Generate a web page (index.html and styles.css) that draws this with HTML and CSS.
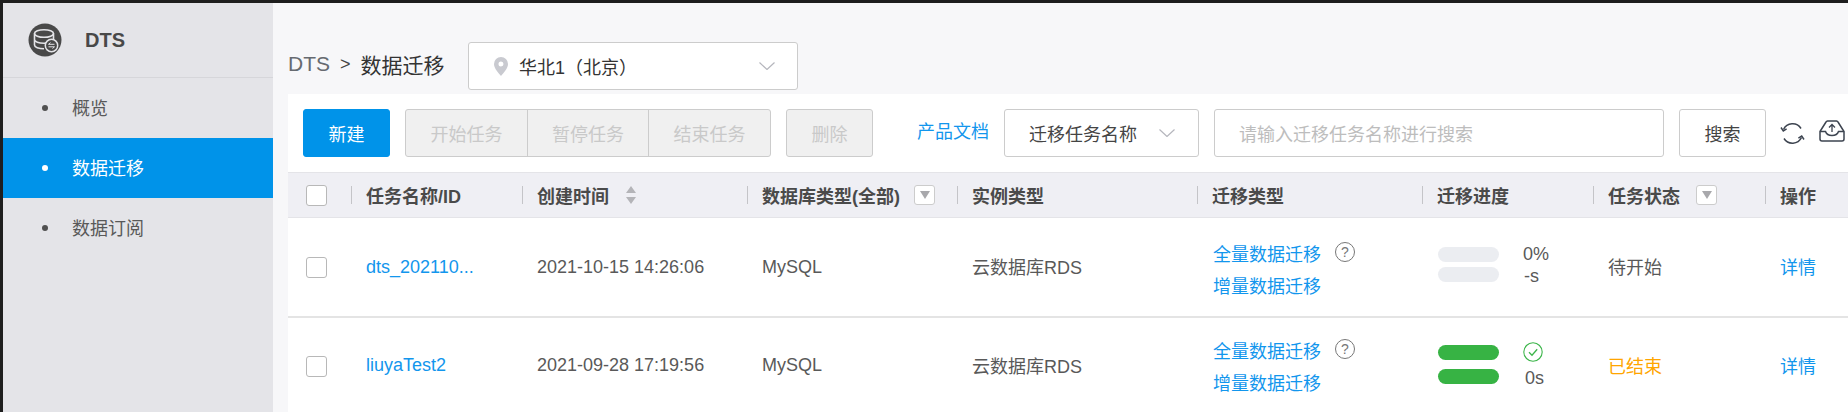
FILE: index.html
```html
<!DOCTYPE html>
<html lang="zh-CN">
<head>
<meta charset="utf-8">
<title>DTS 数据迁移</title>
<link rel="stylesheet" href="styles.css">
</head>
<body>
<div class="app">
  <aside class="sidebar">
    <div class="brand">
      <svg class="brand-logo" viewBox="0 0 34 34" width="34" height="34">
        <circle cx="17" cy="17" r="16.5" fill="#494949"/>
        <g fill="none" stroke="#e4e4e8" stroke-width="1.6">
          <ellipse cx="16" cy="10.5" rx="9.5" ry="3.8"/>
          <path d="M6.5 10.5v11.5c0 2.2 4.2 3.8 9.5 3.8M25.500 10.500v6M6.500 16.500c0 2.200 4.200 3.800 9.500 3.800 1.500 0 2.800-.1 4-.4"/>
        </g>
        <circle cx="23.500" cy="22.500" r="6.200" fill="#494949" stroke="#e4e4e8" stroke-width="1.500"/>
        <path d="M20.500 21.300h6M20.500 21.300l2-1.700M26.500 23.800h-6M26.500 23.800l-2 1.700" fill="none" stroke="#e4e4e8" stroke-width="1"/>
      </svg>
      <span class="brand-name">DTS</span>
    </div>
    <nav class="nav">
      <a class="nav-item"><i class="nav-dot"></i>概览</a>
      <a class="nav-item is-active"><i class="nav-dot"></i>数据迁移</a>
      <a class="nav-item"><i class="nav-dot"></i>数据订阅</a>
    </nav>
  </aside>
  <main class="main">
    <header class="topbar">
      <div class="crumb"><span class="crumb-root">DTS</span><span class="crumb-sep">&gt;</span><span class="crumb-page">数据迁移</span></div>
      <div class="region">
        <svg class="pin" viewBox="0 0 14 19" width="14" height="19"><path fill-rule="evenodd" d="M7 0a7 7 0 0 1 7 7c0 4.500-4.500 9-7 12-2.500-3-7-7.500-7-12a7 7 0 0 1 7-7zm0 4.500a2.500 2.500 0 1 0 0 5 2.500 2.500 0 0 0 0-5z" fill="#c9cad0"/></svg>
        <span class="region-name">华北1（北京）</span>
        <svg class="chev chev-region" viewBox="0 0 16 8" width="16" height="8"><path d="M.5.500 8 7.500 15.500.500" fill="none" stroke="#b5b6bd" stroke-width="1.200"/></svg>
      </div>
    </header>
    <section class="panel">
      <div class="toolbar">
        <button class="btn btn-primary">新建</button>
        <div class="btn-group">
          <span class="seg seg-a">开始任务</span>
          <span class="seg seg-b">暂停任务</span>
          <span class="seg seg-c">结束任务</span>
        </div>
        <button class="btn btn-disabled">删除</button>
        <a class="doc-link">产品文档</a>
        <div class="select">
          <span>迁移任务名称</span>
          <svg class="chev" viewBox="0 0 16 8" width="16" height="8"><path d="M.5.500 8 7.500 15.500.500" fill="none" stroke="#b5b6bd" stroke-width="1.200"/></svg>
        </div>
        <div class="search-input">请输入迁移任务名称进行搜索</div>
        <button class="btn btn-default">搜索</button>
        <svg class="tool-refresh" viewBox="0 0 25 25" width="25" height="25" fill="none" stroke="#3d4450" stroke-width="1.500">
          <path d="M3.500 8.500A10 10 0 0 1 21 7.500M21.500 16.500A10 10 0 0 1 4 17.500"/>
          <path d="M1 6.500l2.300 3.400 3.300-2M24 18.500l-2.300-3.400-3.300 2"/>
        </svg>
        <svg class="tool-export" viewBox="0 0 26 22" width="26" height="22" fill="none" stroke="#3d4450" stroke-width="1.500">
          <path d="M1 11.500 7 2a2 2 0 0 1 1.500-1h9a2 2 0 0 1 1.500 1l6 9.500V19a2 2 0 0 1-2 2H3a2 2 0 0 1-2-2z"/>
          <path d="M1 11.500h5.500c1 3 3.500 4 6.500 4s5.500-1 6.500-4H25"/>
          <path d="M13 12V5M10 7.500 13 4.500l3 3" stroke-width="1.300"/>
        </svg>
      </div>
      <div class="table">
        <div class="row row-head">
          <div class="cell cell-check"><span class="checkbox"></span></div>
          <div class="cell th"><span class="th-in">任务名称/ID</span></div>
          <div class="cell th"><span class="th-in">创建时间
            <svg class="sort" viewBox="0 0 12 18" width="12" height="18"><path d="M6 0l5 7H1zM6 18l-5-7h10z" fill="#b4b4b8"/></svg></span></div>
          <div class="cell th"><span class="th-in">数据库类型(全部)<span class="filter filter-db"><i></i></span></span></div>
          <div class="cell th"><span class="th-in">实例类型</span></div>
          <div class="cell th"><span class="th-in">迁移类型</span></div>
          <div class="cell th"><span class="th-in">迁移进度</span></div>
          <div class="cell th"><span class="th-in">任务状态<span class="filter filter-status"><i></i></span></span></div>
          <div class="cell th"><span class="th-in">操作</span></div>
        </div>

        <div class="row row-body row-first">
          <div class="cell cell-check"><span class="checkbox"></span></div>
          <div class="cell td"><a class="link">dts_202110...</a></div>
          <div class="cell td">2021-10-15 14:26:06</div>
          <div class="cell td">MySQL</div>
          <div class="cell td cjk">云数据库RDS</div>
          <div class="cell td type">
            <div class="type-line"><a class="link">全量数据迁移</a><span class="help">?</span></div>
            <div class="type-line"><a class="link">增量数据迁移</a></div>
          </div>
          <div class="cell td progress progress-idle">
            <div class="prog-line"><span class="bar"></span><span class="prog-val">0%</span></div>
            <div class="prog-line"><span class="bar"></span><span class="prog-val prog-dash">-s</span></div>
          </div>
          <div class="cell td cjk">待开始</div>
          <div class="cell td cjk"><a class="link">详情</a></div>
        </div>

        <div class="row row-body row-last">
          <div class="cell cell-check"><span class="checkbox"></span></div>
          <div class="cell td"><a class="link">liuyaTest2</a></div>
          <div class="cell td">2021-09-28 17:19:56</div>
          <div class="cell td">MySQL</div>
          <div class="cell td cjk">云数据库RDS</div>
          <div class="cell td type">
            <div class="type-line"><a class="link">全量数据迁移</a><span class="help">?</span></div>
            <div class="type-line"><a class="link">增量数据迁移</a></div>
          </div>
          <div class="cell td progress progress-done">
            <div class="prog-line"><span class="bar bar-done"></span>
              <svg class="ok" viewBox="0 0 20 20" width="20" height="20" fill="none" stroke="#3cb54a"><circle cx="10" cy="10" r="9.200" stroke-width="1.100"/><path d="M6 10.300l3 3 5.200-6" stroke-width="1.300"/></svg>
            </div>
            <div class="prog-line"><span class="bar bar-done"></span><span class="prog-val prog-sec">0s</span></div>
          </div>
          <div class="cell td cjk status-done">已结束</div>
          <div class="cell td cjk"><a class="link">详情</a></div>
        </div>
      </div>
    </section>
  </main>
</div>
</body>
</html>
```

FILE: styles.css
```css
* { box-sizing: border-box; }
html, body { margin: 0; height: 100%; }
body {
  background: #1e1e1e;
  padding: 3px 0 0 3px;
  overflow: hidden;
  height: 412px;
  font-family: "Liberation Sans", "Noto Sans CJK SC", sans-serif;
  font-size: 18px;
  color: #595959;
}
.app { display: flex; width: 1845px; height: 409px; }

/* sidebar */
.sidebar { width: 270px; flex: none; background: #e4e4e8; }
.brand {
  height: 75px;
  display: flex;
  align-items: center;
  padding: 0 0 1px 25px;
  border-bottom: 1px solid #d6d6da;
}
.brand-logo { flex: none; }
.brand-name { margin: 2px 0 0 23px; font-size: 20px; font-weight: 700; color: #484848; }
.nav-item {
  height: 60px;
  display: flex;
  align-items: center;
  padding: 0 0 2px 39px;
  color: #595959;
}
.nav-dot { width: 6px; height: 6px; border-radius: 50%; background: #505050; margin: 2px 24px 0 0; }
.nav-item.is-active { background: #0093e9; color: #fff; }
.is-active .nav-dot { background: #fff; }

/* main */
.main { flex: 1; min-width: 0; background: #f7f7f9; padding-left: 15px; overflow: hidden; }
.topbar { height: 91px; padding-top: 39px; display: flex; align-items: flex-start; }
.crumb { display: flex; align-items: center; height: 44px; width: 180px; flex: none; }
.crumb-root { font-size: 21px; color: #666a70; }
.crumb-sep { font-size: 18px; margin: 0 10px; color: #444; }
.crumb-page { font-size: 21px; color: #333; }
.region {
  width: 330px;
  height: 48px;
  background: #fff;
  border: 1px solid #ccc;
  border-radius: 3px;
  display: flex;
  align-items: center;
  padding-left: 25px;
  color: #333;
}
.pin { flex: none; margin-right: 11px; }
.region-name { flex: 1; }
.chev-region { margin-right: 22px; }
.chev { flex: none; }

.panel { background: #fff; width: 1560px; height: 318px; }
.toolbar { height: 78px; padding: 15px; display: flex; align-items: stretch; white-space: nowrap; }
.toolbar > * { flex: none; }
.btn {
  font: inherit;
  width: 87px;
  height: 48px;
  border-radius: 3px;
  border: 1px solid #ccc;
  background: #fff;
  color: #444;
  padding: 0;
}
.btn-primary { background: #0093e9; border-color: #0093e9; color: #fff; }
.btn-disabled { background: #f0f0f0; color: #c9c9c9; margin-left: 15px; }
.btn-group {
  margin-left: 15px;
  width: 366px;
  display: flex;
  border: 1px solid #ccc;
  border-radius: 3px;
  background: #f0f0f0;
  color: #c9c9c9;
}
.seg { display: flex; align-items: center; justify-content: center; }
.seg-a { width: 122px; border-right: 1px solid #ccc; }
.seg-b { width: 121px; border-right: 1px solid #ccc; }
.seg-c { flex: 1; }
.doc-link { margin-left: 44px; align-self: center; color: #1296ed; margin-top: -6px; }
.select {
  margin-left: 15px;
  width: 195px;
  border: 1px solid #ccc;
  border-radius: 3px;
  display: flex;
  align-items: center;
  padding: 0 23px 0 24px;
  justify-content: space-between;
  color: #444;
}
.search-input {
  margin-left: 15px;
  width: 450px;
  border: 1px solid #ccc;
  border-radius: 3px;
  display: flex;
  align-items: center;
  padding-left: 24px;
  color: #bdbdbd;
}
.btn-default { margin-left: 15px; }
.tool-refresh { margin: 12px 0 0 14px; }
.tool-export { margin: 11px 0 0 14px; }

/* table */
.row {
  display: grid;
  grid-template-columns: 63px 171px 225px 210px 240px 225px 171px 172px 83px;
  align-items: center;
}
.row-head {
  height: 46px;
  background: #efeff4;
  border-top: 1px solid #e4e4e8;
  border-bottom: 1px solid #e4e4e8;
  font-weight: 700;
  color: #4a4a4a;
  white-space: nowrap;
}
.cell-check { padding-left: 18px; display: flex; }
.checkbox {
  display: block;
  width: 21px;
  height: 21px;
  background: #fff;
  border: 1px solid #b8b8b8;
  border-radius: 3px;
}
.th-in {
  display: flex;
  align-items: center;
  height: 18px;
  padding-left: 14px;
  border-left: 1px solid #c4c4c8;
}
.sort { margin-left: 16px; flex: none; }
.filter {
  width: 21px;
  height: 20px;
  background: #fff;
  border: 1px solid #ccc;
  border-radius: 3px;
  display: flex;
  align-items: center;
  justify-content: center;
  flex: none;
}
.filter i {
  display: block;
  border-left: 5px solid transparent;
  border-right: 5px solid transparent;
  border-top: 8px solid #a8a8ac;
}
.filter-db { margin-left: 14px; }
.filter-status { margin-left: 16px; }

.row-body { height: 96px; background: #fff; }
.row-first { height: 100px; border-bottom: 2px solid #e4e4e4; }
.row-last .td { margin-top: -1px; }
.row-body .cjk { margin-top: -3px; }
.td { padding-left: 15px; white-space: nowrap; }
.link { color: #1296ed; }
.type-line { display: flex; align-items: center; height: 32px; }
.type { padding-top: 4px; padding-left: 16px; }
.row-last .type { padding-top: 1px; }
.help {
  width: 20px;
  height: 20px;
  margin: -2px 0 0 14px;
  border: 1px solid #777;
  border-radius: 50%;
  font-size: 14px;
  line-height: 18px;
  text-align: center;
  color: #777;
}
.progress { padding-left: 16px; display: flex; flex-direction: column; }
.progress-idle { gap: 5px; margin-top: -5px; }
.row-last .progress-done { gap: 9px; margin-top: -3px; }
.prog-line { display: flex; align-items: center; height: 15px; }
.bar { width: 61px; height: 15px; border-radius: 8px; background: #ebedf1; flex: none; }
.bar-done { background: #37b344; }
.prog-val { margin-left: 24px; }
.prog-dash { margin-top: 4px; margin-left: 25px; }
.prog-sec { margin-left: 26px; margin-top: 3px; }
.ok { margin: -1px 0 0 24px; flex: none; }
.status-done { color: #ffa500; }
```
